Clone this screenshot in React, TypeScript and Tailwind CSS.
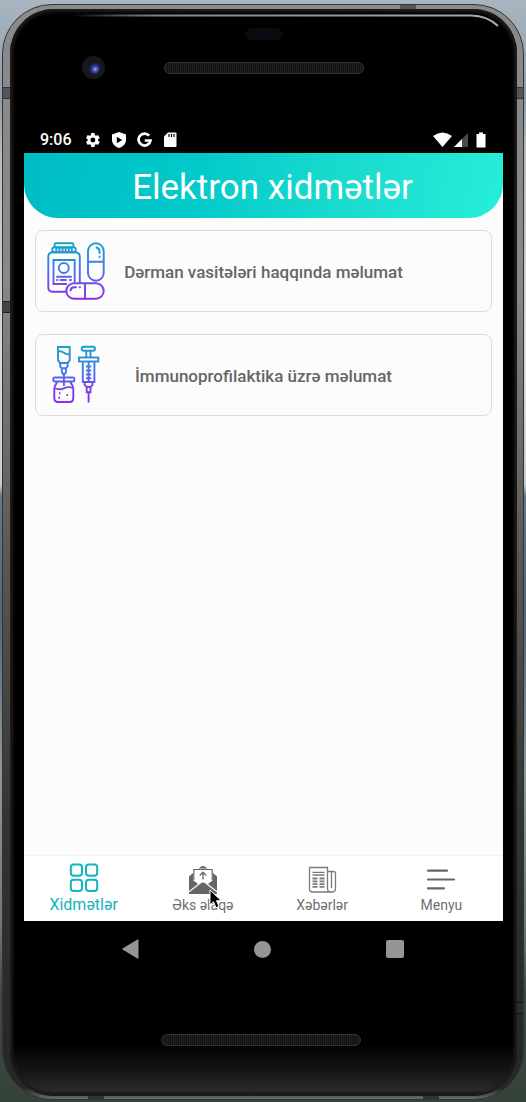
import type { ReactNode } from "react";

function SettingsIcon() {
  return (
    <svg className="size-4" viewBox="0 0 24 24" fill="#fff" aria-hidden="true">
      <path d="M19.6 13c.1-.3.1-.7.1-1s0-.7-.1-1l2.200-1.700c.2-.2.3-.5.1-.7l-2.100-3.700c-.1-.2-.4-.3-.6-.2l-2.600 1c-.5-.4-1.100-.8-1.800-1l-.4-2.800c0-.2-.2-.4-.5-.4h-4.200c-.3 0-.5.2-.5.4l-.4 2.800c-.6.3-1.200.6-1.800 1l-2.600-1c-.2-.1-.5 0-.6.2L1.700 8.600c-.1.2-.1.500.1.700L4 11c0 .3-.1.700-.1 1s0 .7.1 1l-2.200 1.700c-.2.200-.3.500-.1.700l2.100 3.700c.1.200.4.300.6.200l2.600-1c.5.400 1.100.8 1.800 1l.4 2.800c0 .2.2.400.500.400h4.200c.3 0 .5-.2.500-.4l.4-2.800c.6-.3 1.200-.6 1.800-1l2.600 1c.2.100.5 0 .6-.2l2.100-3.700c.1-.2.1-.5-.1-.7zM11.800 15.700a3.700 3.700 0 1 1 0-7.400 3.700 3.700 0 0 1 0 7.400z" />
    </svg>
  );
}

function ShieldIcon() {
  return (
    <svg className="size-4" viewBox="0 0 16 16" aria-hidden="true">
      <path d="M8 0 L15 2.500 V8 C15 12 11.500 15 8 16 C4.500 15 1 12 1 8 V2.500 Z" fill="#fff" />
      <path d="M5.800 4.700 L11.200 8 L5.800 11.300 Z" fill="#000" />
    </svg>
  );
}

function GoogleIcon() {
  return (
    <svg className="size-4" viewBox="0 0 16 16" fill="none" stroke="#fff" strokeWidth="2.700" aria-hidden="true">
      <path d="M12.200 3.700 A6 6 0 1 0 13.500 8.500 H7.800" />
    </svg>
  );
}

function SdIcon() {
  return (
    <svg className="size-4" viewBox="0 0 16 16" aria-hidden="true">
      <path d="M5 0.500 H12.500 Q13.500 0.500 13.500 1.500 V14 Q13.500 15 12.500 15 H2 Q1 15 1 14 V4.500 Z" fill="#fff" />
      <path d="M6 2V5M8.500 2V5M11 2V5" stroke="#000" strokeWidth="1.200" />
    </svg>
  );
}

function StatusBar() {
  return (
    <div className="flex h-[27px] items-center justify-between pr-4 pl-4 text-white">
      <div className="flex items-center">
        <span className="w-[45px] text-[16px] leading-6 font-medium">9:06</span>
        <div className="flex items-center gap-[10px]">
          <SettingsIcon />
          <ShieldIcon />
          <GoogleIcon />
          <SdIcon />
        </div>
      </div>
      <svg className="h-4 w-[54px]" viewBox="0 0 54 16" aria-hidden="true">
        <path d="M0 4 Q9.500 -3 19 4 L9.500 15 Z" fill="#fff" />
        <path d="M21 15 L35 1 V15 Z" fill="#4b4b4b" />
        <path d="M21 15 L29 7 V15 Z" fill="#fff" />
        <path d="M43.500 2 H46 V0.500 H50 V2 H52.500 V15.500 H43.500 Z" fill="#fff" />
      </svg>
    </div>
  );
}

function MedicineIcon() {
  return (
    <svg className="size-[60px] shrink-0" viewBox="0 0 60 60" fill="none" stroke="url(#medicine)" strokeWidth="1.900" strokeLinecap="round" aria-hidden="true">
      <defs>
        <linearGradient id="medicine" gradientUnits="userSpaceOnUse" x1="0" y1="0" x2="0" y2="60">
          <stop offset="0" stopColor="#10a8c4" />
          <stop offset="0.500" stopColor="#4a74ea" />
          <stop offset="0.900" stopColor="#8a2fe8" />
        </linearGradient>
      </defs>
      <rect x="7.500" y="2.300" width="19" height="4.200" rx="1.500" />
      <path d="M6.500 11.300 L5.300 9.500 V7.700 L6.500 6.400 H27.500 L28.700 7.700 V9.500 L27.500 11.300 Z" />
      <path d="M9.300 6.500V11M12.400 6.500V11M15.500 6.500V11M18.600 6.500V11M21.700 6.500V11M24.800 6.500V11" />
      <path d="M19.500 50.700 H5.500 Q1.300 50.700 1.300 46.500 V16 Q1.300 11.300 6 11.300 H28 Q32.800 11.300 32.800 16 V42" />
      <path d="M20 43 H6.500 V19 H27.700 V41.500" strokeLinecap="butt" />
      <circle cx="16.800" cy="27" r="5" />
      <path d="M10 35.700H24M10 39H10.500M13.500 39H19M23 39H24" />
      <rect x="41" y="2.300" width="15.700" height="37.400" rx="7.800" />
      <path d="M41 20.700H56.700M49.500 6.500Q52.500 7.500 52.500 10.500V12M52.500 15.500V16" />
      <rect x="19.300" y="42.200" width="37.400" height="15.500" rx="7.700" />
      <path d="M38 42.500V57.500M23.500 49.500Q24 46.500 27 46.300H29M32.700 46.300H33" />
    </svg>
  );
}

function VaccineIcon() {
  return (
    <svg className="size-[60px] shrink-0" viewBox="-5 0 60 60" fill="none" stroke="url(#vaccine)" strokeWidth="1.900" aria-hidden="true">
      <defs>
        <linearGradient id="vaccine" gradientUnits="userSpaceOnUse" x1="0" y1="0" x2="0" y2="60">
          <stop offset="0" stopColor="#10a8c4" />
          <stop offset="0.450" stopColor="#4a74ea" />
          <stop offset="0.850" stopColor="#8a2fe8" />
        </linearGradient>
      </defs>
      <path d="M6 2 H17.700 V15.500 L15.500 18 H8.200 L6 15.500 Z" />
      <path d="M6 6.500 Q9 5.500 12 7.800 T17.700 9" />
      <path d="M8.200 18 V21.500 L9.800 23.300 H14 L15.600 21.500 V18 M9.800 23.300 V27 L11 29 H12.800 L14 27 V23.300 M11.900 29 V41" />
      <rect x="1.300" y="32.500" width="21" height="4" rx="1.300" />
      <path d="M4.500 36.500 V38.500 Q2.300 40.500 2.300 43.500 V53 Q2.300 57 6 57 H17.700 Q21.300 57 21.300 53 V43.500 Q21.300 40.500 19 38.500 V36.500" />
      <path d="M2.500 43 Q7.500 45.500 11.900 43.300 T21.200 43" />
      <path d="M7 48.300H8.500M14.500 50H16M6.500 52.800H8" />
      <rect x="29.700" y="1.700" width="13.300" height="4" rx="2" />
      <path d="M34.300 5.700V12.300M38.500 5.700V12.300" />
      <rect x="27" y="12.500" width="19.300" height="4" />
      <path d="M30.800 16.500 V37 H42.400 V16.500" />
      <path d="M36.600 16.500V36M34 21.500H39.200M34 25.500H39.200M34 29.500H39.200M34 33.300H39.200" />
      <path d="M32.700 37 V40 L34.700 42 H38.500 L40.500 40 V37 M34.700 42 V47.300 H38.500 V42 M36.600 47.300 V57.500" />
    </svg>
  );
}

function ServiceCard({ icon, label }: { icon: ReactNode; label: string }) {
  return (
    <a
      href="#"
      className="flex h-[82px] items-center rounded-lg border border-[#dcdcdc] pr-[71px] pl-[11px] text-center text-[17px] leading-5 font-medium text-[#666]"
    >
      {icon}
      <span className="grow pt-px whitespace-nowrap">{label}</span>
    </a>
  );
}

function GridIcon() {
  return (
    <svg className="size-8" viewBox="0 0 32 32" fill="none" stroke="#10b5bd" strokeWidth="2" aria-hidden="true">
      <rect x="2.800" y="1.500" width="11.200" height="11.200" rx="3" />
      <rect x="18" y="1.500" width="11.200" height="11.200" rx="3" />
      <rect x="2.800" y="16.700" width="11.200" height="11.200" rx="3" />
      <rect x="18" y="16.700" width="11.200" height="11.200" rx="3" />
    </svg>
  );
}

function MailIcon() {
  return (
    <svg className="size-8" viewBox="0 0 32 32" aria-hidden="true">
      <path d="M11.500 5.500 L14 3.500 Q16 2.300 18 3.500 L20.500 5.500 Z" fill="#666" />
      <path d="M2 13.500 L6 10 V17 L11 21 L2 28 Z M30 13.500 L26 10 V17 L21 21 L30 28 Z" fill="#666" />
      <path d="M2 30.500 V29.500 L14 20.300 Q16 18.800 18 20.300 L30 29.500 V30.500 Q30 31 29.500 31 H2.500 Q2 31 2 30.500 Z" fill="#666" />
      <path d="M6.800 17 V6.500 H25.200 V17" fill="none" stroke="#666" strokeWidth="1.200" />
      <path d="M16 16.500 V9.500 M12.700 12.500 L16 9.200 L19.300 12.500" fill="none" stroke="#666" strokeWidth="1.300" />
    </svg>
  );
}

function NewsIcon() {
  return (
    <svg className="size-8" viewBox="0 0 32 32" fill="none" stroke="#7a7a7a" strokeWidth="1.300" aria-hidden="true">
      <path d="M21.500 26 V4.500 H3.500 V26 Q3.500 29 6.500 29 H26 Q29.500 29 29.500 25.500 V10.500 Q29.500 8.500 27.500 8.500 H21.500 M21.500 25.500 Q21.500 29 25 29 M25.500 8.500 V25" />
      <path d="M6.500 9.300H18.500M6.500 12H18.500" />
      <path d="M6.500 15.500H11.500M6.500 18.300H11.500M6.500 21.100H11.500M6.500 23.900H11.500M13.500 15.500H18.500M13.500 18.300H18.500M13.500 21.100H18.500M13.500 23.900H18.500" strokeWidth="1.800" />
    </svg>
  );
}

function MenuIcon() {
  return (
    <svg className="size-8" viewBox="0 0 32 32" stroke="#666" strokeWidth="2.200" strokeLinecap="round" aria-hidden="true">
      <path d="M3 7.700H22M3 16.500H29M3 25.300H19" />
    </svg>
  );
}

function Pointer() {
  return (
    <svg className="absolute top-[33px] left-[66px] h-[22px] w-[15px]" viewBox="0 0 15 22" aria-hidden="true">
      <path d="M1 1 V16 L4.500 12.800 L7 18.700 L10 17.400 L7.500 11.700 H12.300 Z" fill="#000" stroke="#fff" strokeWidth="1" />
    </svg>
  );
}

function Tab({ icon, label, active, children }: { icon: ReactNode; label: string; active?: boolean; children?: ReactNode }) {
  return (
    <button
      type="button"
      className={
        active
          ? "relative flex flex-col items-center pt-[7px] pb-1.5 text-[16px] leading-5 text-[#10b5bd]"
          : "relative flex flex-col items-center pt-[7px] pb-1.5 text-[14px] leading-5 text-[#6f6f6f]"
      }
    >
      {icon}
      <span>{label}</span>
      {children}
    </button>
  );
}

function Grille() {
  return (
    <div className="h-3 w-[200px] rounded-full border border-[#34332f] bg-[repeating-linear-gradient(90deg,#11110f_0px,#11110f_1px,#22211e_1px,#22211e_2px)]" />
  );
}

export default function App() {
  return (
    <div className="flex min-h-screen flex-col bg-[linear-gradient(180deg,#a9b6c1_0%,#8d9dab_9%,#b8bdba_14%,#d9dbd5_32%,#c9d0d3_44%,#64798c_45%,#53687a_56%,#8e989b_70%,#6d7873_84%,#3d4a41_90%,#35423a_100%)] px-0.5 pt-1 pb-0.5 font-['Roboto','Noto_Sans',sans-serif]">
      <div className="relative flex grow flex-col rounded-[50px] border border-[#333] bg-[linear-gradient(180deg,#8a8a8a_0%,#888_25%,#5a5956_50%,#333_75%,#262626_99%,#6a6a6a_100%)] pt-1 pr-1.5 pb-[3px] pl-[7px]">
        <div className="absolute top-[82px] left-0 h-3 w-[7px] border-y border-[#333] bg-[#555]" />
        <div className="absolute top-[296px] left-0 h-3 w-[7px] border-y border-[#222] bg-[#444]" />
        <div className="absolute top-[82px] right-0 h-3 w-1.5 border-y border-[#333] bg-[#555]" />
        <div className="absolute right-0 bottom-[85px] h-3 w-1.5 border-y border-[#111] bg-[#2c2c2c]" />
        <div className="absolute top-0 right-[107px] h-1 w-4 bg-[#555]" />
        <div className="absolute bottom-0 left-[85px] h-[3px] w-4 bg-[#333]" />
        <div className="absolute right-[84px] bottom-0 h-[3px] w-4 bg-[#333]" />
        <div className="relative flex grow flex-col rounded-[44px] bg-[linear-gradient(0deg,#0c0c0c_0px,#2b2b2b_5px,#161616_24px,#000_52px)] px-3.5 shadow-[inset_0_0_3px_3px_#1c1c1c]">
          <svg className="absolute top-1 right-4 h-4 w-[430px]" viewBox="0 0 430 16" fill="none" aria-hidden="true">
            <defs>
              <linearGradient id="glare" gradientUnits="userSpaceOnUse" x1="0" y1="0" x2="430" y2="0">
                <stop offset="0" stopColor="#9aa0a8" stopOpacity="0" />
                <stop offset="0.200" stopColor="#82868c" />
                <stop offset="1" stopColor="#a8acb2" />
              </linearGradient>
            </defs>
            <path d="M0 2.500 H400 Q416 2.500 427 13" stroke="url(#glare)" strokeWidth="1.800" />
          </svg>
          <div className="flex h-[117px] flex-col items-center pt-[19px]">
            <div className="h-3 w-9 rounded-full bg-[#0b0b12]" />
            <div className="mt-4 grid w-full grid-cols-[1fr_200px_1fr] items-center">
              <div className="ml-[58px] flex size-[23px] items-center justify-center rounded-full bg-[#18181a]">
                <div className="size-3 rounded-full bg-[radial-gradient(circle_at_60%_60%,#a0aaff_0%,#3d4aae_25%,#171c50_55%,#080a20_100%)]" />
              </div>
              <Grille />
            </div>
          </div>
          <StatusBar />
          <div className="flex grow flex-col bg-[#fcfcfc]">
            <header className="flex h-[65px] items-center justify-center rounded-b-[34px] bg-[linear-gradient(100deg,#00bcc4_0%,#02c9ca_35%,#18dace_65%,#26eed9_100%)]">
              <h1 className="pt-1 pl-4.5 text-[35px] leading-[42px] font-normal text-white">Elektron xidmətlər</h1>
            </header>
            <main className="flex grow flex-col gap-[22px] px-[11px] pt-3">
              <ServiceCard icon={<MedicineIcon />} label="Dərman vasitələri haqqında məlumat" />
              <ServiceCard icon={<VaccineIcon />} label="İmmunoprofilaktika üzrə məlumat" />
            </main>
            <nav className="grid grid-cols-4 border-t border-[#f3f3f3] bg-white pr-0.5">
              <Tab icon={<GridIcon />} label="Xidmətlər" active />
              <Tab icon={<MailIcon />} label="Əks əlaqə">
                <Pointer />
              </Tab>
              <Tab icon={<NewsIcon />} label="Xəbərlər" />
              <Tab icon={<MenuIcon />} label="Menyu" />
            </nav>
          </div>
          <div className="flex h-14 items-center justify-center gap-[112px] pr-0.5">
            <button type="button" aria-label="Geri" className="flex size-5 items-center justify-center">
              <svg className="size-5" viewBox="0 0 20 20" aria-hidden="true">
                <path d="M17.500 1 V19 Q17.500 20 16.500 19.500 L1.500 10.500 Q1 10 1.500 9.500 L16.500 0.500 Q17.500 0 17.500 1 Z" fill="#959595" />
              </svg>
            </button>
            <button type="button" aria-label="Əsas ekran" className="flex size-5 items-center justify-center">
              <span className="size-[17px] rounded-full bg-[#959595]" />
            </button>
            <button type="button" aria-label="Son tətbiqlər" className="flex size-5 items-center justify-center">
              <span className="size-[18px] rounded-xs bg-[#959595]" />
            </button>
          </div>
          <div className="flex justify-center pt-[57px] pr-1.5 pb-[50px]">
            <Grille />
          </div>
        </div>
      </div>
    </div>
  );
}
